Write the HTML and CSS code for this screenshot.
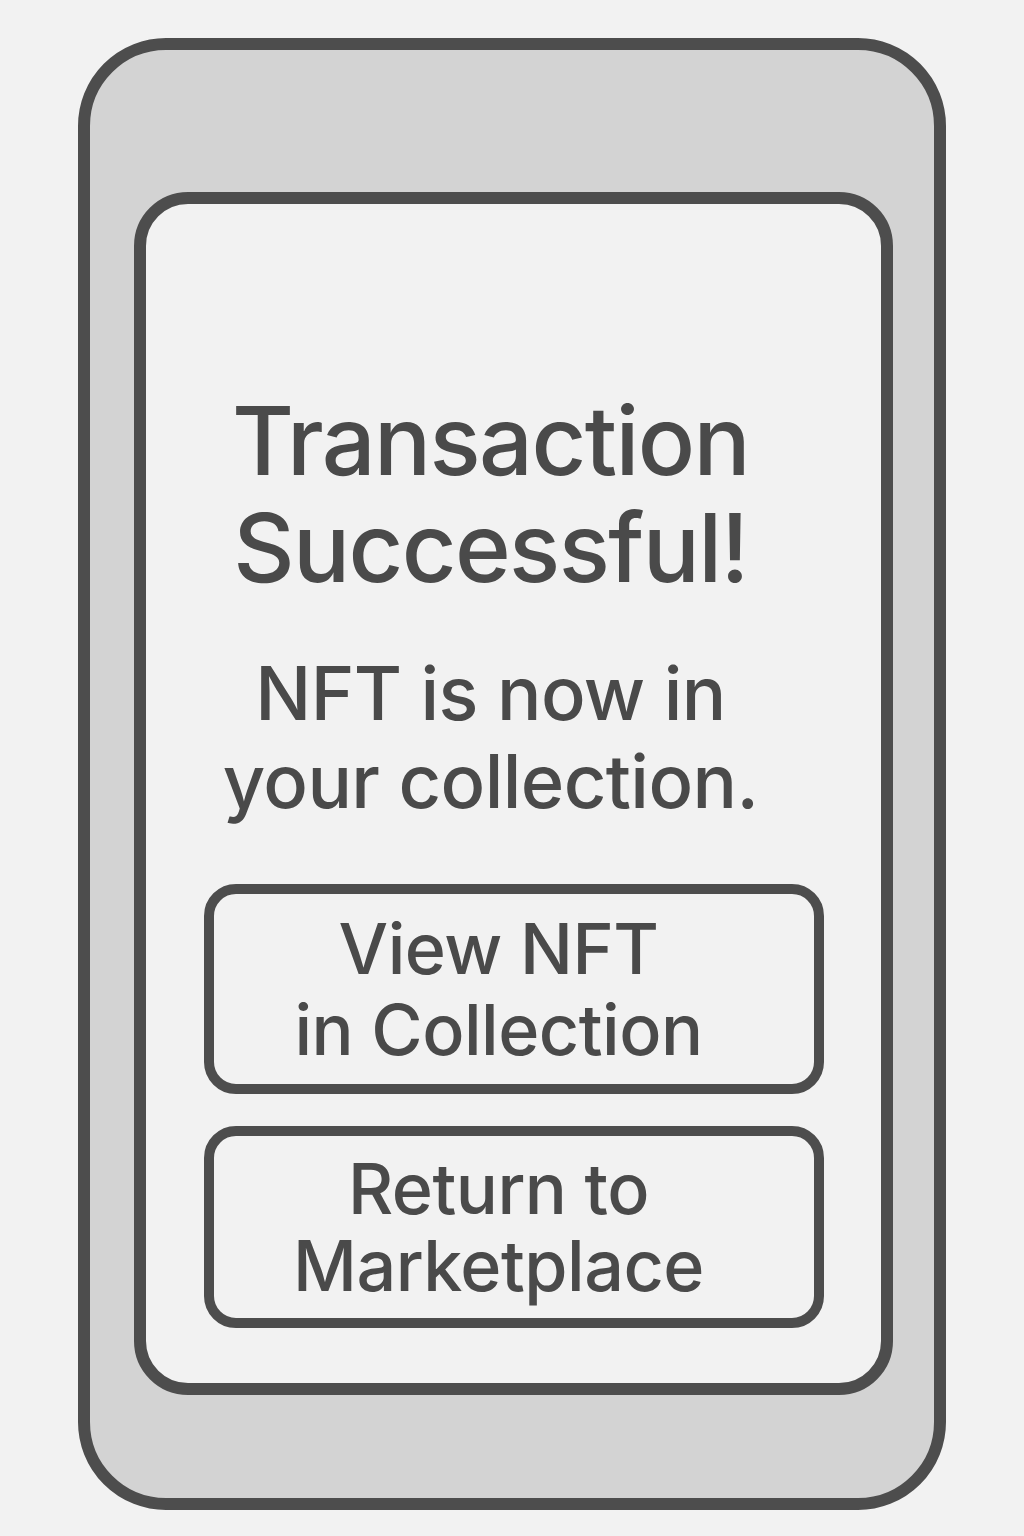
FILE: index.html
```html
<!DOCTYPE html>
<html lang="en">
<head>
<meta charset="utf-8">
<title>Transaction Successful</title>
<link rel="stylesheet" href="styles.css">
</head>
<body>
<div class="phone">
  <div class="screen">
    <h1 class="title">Transaction<br>Successful!</h1>
    <p class="subtitle">NFT is now in<br>your collection.</p>
    <div class="actions">
      <button class="btn btn-primary">View NFT<br>in Collection</button>
      <button class="btn btn-secondary">Return to<br>Marketplace</button>
    </div>
  </div>
</div>
</body>
</html>
```
FILE: styles.css
```css
html, body {
  margin: 0;
  padding: 0;
  background: #f2f2f2;
}
body {
  font-family: Inter, "Noto Sans", "Liberation Sans", sans-serif;
  color: #4a4a4a;
  width: 1024px;
  height: 1536px;
}
.phone {
  box-sizing: border-box;
  margin-left: 78px;
  margin-top: 38px;
  width: 868px;
  height: 1472px;
  border: 12px solid #4d4d4d;
  border-radius: 88px;
  background: #d3d3d3;
  padding: 142px 40px 102px 44px;
  display: flex;
}
.screen {
  box-sizing: border-box;
  width: 759px;
  height: 1203px;
  border: 12px solid #4d4d4d;
  border-radius: 54px;
  background: #f2f2f2;
  display: flex;
  flex-direction: column;
  align-items: center;
  padding-top: 183px;
}
.title {
  margin: 0;
  padding-right: 46px;
  font-size: 95px;
  line-height: 107px;
  font-weight: 500;
  text-align: center;
  letter-spacing: -1.6px;
}
.subtitle {
  margin: 48px 0 0;
  padding-right: 46px;
  font-size: 74px;
  line-height: 88px;
  font-weight: 500;
  text-align: center;
  letter-spacing: -0.6px;
}
.actions {
  margin-top: 59px;
  display: flex;
  flex-direction: column;
  gap: 32px;
}
.btn {
  box-sizing: border-box;
  width: 620px;
  border: 10px solid #4d4d4d;
  border-radius: 32px;
  background: #f2f2f2;
  color: #4a4a4a;
  font-family: inherit;
  font-size: 70px;
  font-weight: 500;
  letter-spacing: -0.5px;
  text-align: center;
  padding: 0 30px 0 0;
  display: flex;
  align-items: center;
  justify-content: center;
}
.btn-primary {
  height: 210px;
  line-height: 81px;
}
.btn-secondary {
  height: 202px;
  line-height: 77px;
}
```
